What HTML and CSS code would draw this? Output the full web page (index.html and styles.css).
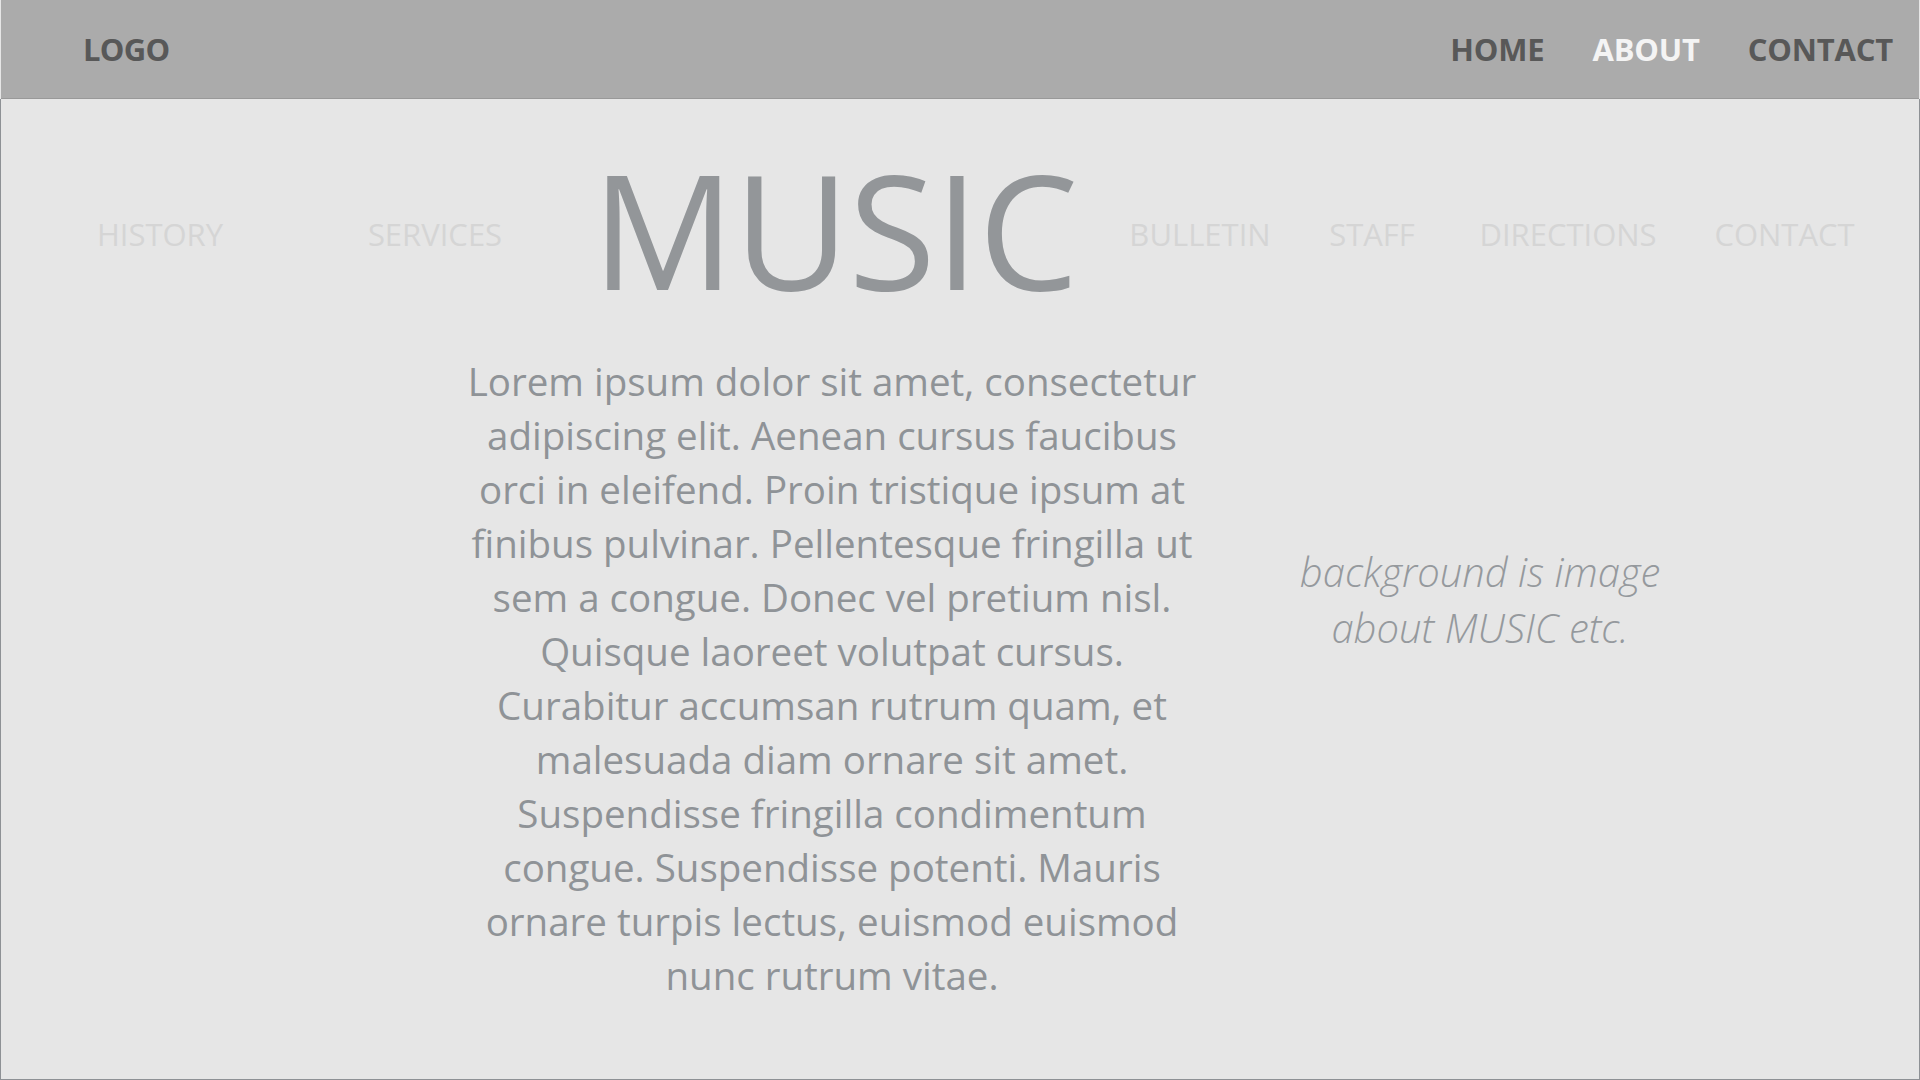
FILE: index.html
```html
<!DOCTYPE html>
<html lang="en">
<head>
<meta charset="utf-8">
<title>Music</title>
<link rel="stylesheet" href="styles.css">
</head>
<body>
<header class="topbar">
  <div class="logo">LOGO</div>
  <nav class="mainnav">
    <a class="mainnav-link" href="#">HOME</a>
    <a class="mainnav-link is-active" href="#">ABOUT</a>
    <a class="mainnav-link" href="#">CONTACT</a>
  </nav>
</header>
<main class="stage">
  <div class="subnav-row">
    <a class="sub sub-history" href="#">HISTORY</a>
    <a class="sub sub-services" href="#">SERVICES</a>
    <h1 class="title">MUSIC</h1>
    <a class="sub sub-bulletin" href="#">BULLETIN</a>
    <a class="sub sub-staff" href="#">STAFF</a>
    <a class="sub sub-directions" href="#">DIRECTIONS</a>
    <a class="sub sub-contact" href="#">CONTACT</a>
  </div>
  <div class="content">
    <p class="lead">Lorem ipsum dolor sit amet, consectetur<br>adipiscing elit. Aenean cursus faucibus<br>orci in eleifend. Proin tristique ipsum at<br>finibus pulvinar. Pellentesque fringilla ut<br>sem a congue. Donec vel pretium nisl.<br>Quisque laoreet volutpat cursus.<br>Curabitur accumsan rutrum quam, et<br>malesuada diam ornare sit amet.<br>Suspendisse fringilla condimentum<br>congue. Suspendisse potenti. Mauris<br>ornare turpis lectus, euismod euismod<br>nunc rutrum vitae.</p>
    <p class="note">background is image<br>about MUSIC etc.</p>
  </div>
</main>
</body>
</html>
```

FILE: styles.css
```css
* { box-sizing: border-box; }
html, body { margin: 0; padding: 0; }
body {
  width: 1920px;
  height: 1080px;
  background: #e6e6e6;
  font-family: "Segoe UI", "Open Sans", "Noto Sans", sans-serif;
  display: flex;
  flex-direction: column;
  overflow: hidden;
}
a { text-decoration: none; color: inherit; }

.topbar {
  height: 99px;
  margin: 0 1px;
  background: #ababab;
  border-bottom: 1px solid #999999;
  display: flex;
  align-items: center;
  justify-content: space-between;
  padding: 0 26px 0 82px;
}
.logo {
  font-weight: 700;
  font-size: 31px;
  line-height: 1;
  color: #585858;
  letter-spacing: -0.7px;
  margin-top: 1px;
}
.mainnav {
  display: flex;
  gap: 48px;
}
.mainnav-link {
  font-weight: 700;
  font-size: 31px;
  line-height: 1;
  color: #585858;
  letter-spacing: -0.2px;
  margin-top: 1px;
}
.mainnav-link.is-active { color: #f4f4f4; }

.stage {
  flex: 1;
  border: 1px solid #8e9195;
  border-top: none;
  display: flex;
  flex-direction: column;
}

.subnav-row {
  display: flex;
  align-items: flex-start;
  margin-top: 52px;
  padding-left: 98px;
  height: 155px;
}
.sub {
  font-size: 31px;
  line-height: 1;
  color: #d5d5d5;
  text-align: center;
  white-space: nowrap;
  margin-top: 68px;
  display: flex;
  justify-content: center;
}
.sub-history { width: 122px; }
.sub-services { width: 132px; margin-left: 148px; }
.sub-bulletin { width: 134px; margin-left: 64px; }
.sub-staff { width: 82px; margin-left: 64px; }
.sub-directions { width: 176px; margin-left: 67px; }
.sub-contact { width: 137px; margin-left: 60px; }

.title {
  margin: 0 0 0 99px;
  width: 469px;
  font-size: 159px;
  line-height: 155px;
  font-weight: 400;
  color: #939699;
  text-align: center;
  display: flex;
  justify-content: center;
  white-space: nowrap;
  letter-spacing: -1px;
}

.content {
  display: flex;
  align-items: flex-start;
  padding-left: 450px;
  margin-top: 48px;
}
.lead {
  margin: 0;
  width: 762px;
  font-size: 38.5px;
  line-height: 54px;
  color: #8f9397;
  text-align: center;
  white-space: nowrap;
}
.note {
  margin: 190px 0 0 0;
  width: 534px;
  font-size: 40px;
  line-height: 56px;
  font-style: italic;
  font-weight: 300;
  color: #95999d;
  text-align: center;
  white-space: nowrap;
}
```
